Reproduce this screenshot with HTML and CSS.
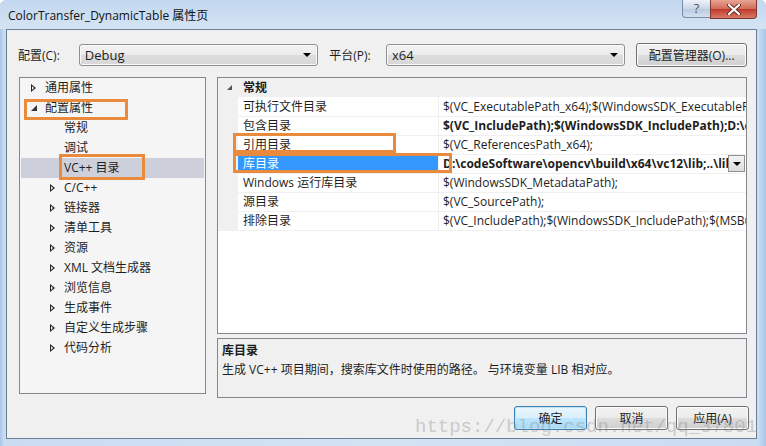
FILE: index.html
```html
<!DOCTYPE html>
<html>
<head>
    <title>ColorTransfer_DynamicTable 属性页</title>
    <link rel="stylesheet" href="styles.css">
</head>
<body>
    <div class="window">
        <div class="titlebar">
            <span class="title">ColorTransfer_DynamicTable 属性页</span>
            <div class="caption-buttons">
                <div class="cap-help">?</div>
                <div class="cap-close">
                    <svg width="14" height="11" viewBox="0 0 14 11"><path d="M2 1 L12 10 M12 1 L2 10" stroke="#6b2a22" stroke-width="4" stroke-linecap="round"/><path d="M2 1 L12 10 M12 1 L2 10" stroke="#fff" stroke-width="2.2" stroke-linecap="round"/></svg>
                </div>
            </div>
        </div>
        <div class="client">
            <div class="toolbar">
                <span class="label label-config">配置(C):</span>
                <div class="combo"><span>Debug</span><i class="arrow"></i></div>
                <span class="label label-platform">平台(P):</span>
                <div class="combo"><span>x64</span><i class="arrow"></i></div>
                <button class="btn btn-manager">配置管理器(O)...</button>
            </div>

            <div class="main">
                <div class="tree">
                    <div class="node lvl0"><i class="tri-open"></i>通用属性</div>
                    <div class="node lvl0"><i class="tri-down"></i>配置属性<span class="mark mark-config"></span></div>
                    <div class="node lvl1">常规</div>
                    <div class="node lvl1">调试</div>
                    <div class="node lvl1 selected">VC++ 目录<span class="mark mark-vc"></span></div>
                    <div class="node lvl1"><i class="tri-open"></i>C/C++</div>
                    <div class="node lvl1"><i class="tri-open"></i>链接器</div>
                    <div class="node lvl1"><i class="tri-open"></i>清单工具</div>
                    <div class="node lvl1"><i class="tri-open"></i>资源</div>
                    <div class="node lvl1"><i class="tri-open"></i>XML 文档生成器</div>
                    <div class="node lvl1"><i class="tri-open"></i>浏览信息</div>
                    <div class="node lvl1"><i class="tri-open"></i>生成事件</div>
                    <div class="node lvl1"><i class="tri-open"></i>自定义生成步骤</div>
                    <div class="node lvl1"><i class="tri-open"></i>代码分析</div>
                </div>

                <div class="right">
                    <div class="grid">
                        <div class="prow header">
                            <div class="gutter"><i class="tri-down small"></i></div>
                            <div class="name">常规</div>
                            <div class="value"></div>
                        </div>
                        <div class="prow">
                            <div class="gutter"></div>
                            <div class="name">可执行文件目录</div>
                            <div class="value">$(VC_ExecutablePath_x64);$(WindowsSDK_ExecutablePath_x64);$(VS_ExecutablePath)</div>
                        </div>
                        <div class="prow">
                            <div class="gutter"></div>
                            <div class="name">包含目录</div>
                            <div class="value bold">$(VC_IncludePath);$(WindowsSDK_IncludePath);D:\codeSoftware\opencv\build\include</div>
                        </div>
                        <div class="prow">
                            <div class="gutter"></div>
                            <div class="name">引用目录<span class="mark mark-ref"></span></div>
                            <div class="value">$(VC_ReferencesPath_x64);</div>
                        </div>
                        <div class="prow active">
                            <div class="gutter"></div>
                            <div class="name">库目录<span class="mark mark-lib"></span></div>
                            <div class="value bold editing">
                                <span class="edit-text">D:\codeSoftware\opencv\build\x64\vc12\lib;..\lib</span>
                                <span class="drop"><i class="arrow"></i></span>
                            </div>
                        </div>
                        <div class="prow">
                            <div class="gutter"></div>
                            <div class="name">Windows 运行库目录</div>
                            <div class="value">$(WindowsSDK_MetadataPath);</div>
                        </div>
                        <div class="prow">
                            <div class="gutter"></div>
                            <div class="name">源目录</div>
                            <div class="value">$(VC_SourcePath);</div>
                        </div>
                        <div class="prow">
                            <div class="gutter"></div>
                            <div class="name">排除目录</div>
                            <div class="value">$(VC_IncludePath);$(WindowsSDK_IncludePath);$(MSBuild_ExecutablePath)</div>
                        </div>
                    </div>
                    <div class="desc">
                        <div class="desc-title">库目录</div>
                        <div class="desc-text">生成 VC++ 项目期间，搜索库文件时使用的路径。 与环境变量 LIB 相对应。</div>
                    </div>
                </div>
            </div>

            <div class="footer">
                <button class="btn btn-default">确定</button>
                <button class="btn">取消</button>
                <button class="btn">应用(A)</button>
            </div>
            <div class="watermark">https://blog.csdn.net/qq_37801</div>
        </div>
    </div>
</body>
</html>
```

FILE: styles.css
```css
body {
    margin: 0;
    padding: 0;
    font-family: "Open Sans", "Noto Sans CJK SC", sans-serif;
    font-size: 12px;
    color: #1e1e1e;
}

.window {
    width: 766px;
    height: 446px;
    box-sizing: border-box;
    display: flex;
    flex-direction: column;
    background: linear-gradient(90deg, #a9c6e6 0px, #c9dcf1 4px, #d3e3f4 50%, #c9dcf1 99%, #a9c6e6 100%);
    border-radius: 6px 6px 0 0;
    overflow: hidden;
}

.titlebar {
    height: 29px;
    flex: none;
    display: flex;
    justify-content: space-between;
    align-items: flex-start;
    padding: 0 9px 0 8px;
    background: linear-gradient(#c2d7ee, #d5e4f4);
}

.title {
    margin-top: 6px;
    font-size: 12px;
    color: #111;
}

.caption-buttons {
    display: flex;
}

.cap-help {
    width: 27px;
    height: 17px;
    border: 1px solid #7a8da6;
    border-top: none;
    border-right: none;
    border-radius: 0 0 0 4px;
    background: linear-gradient(#eef3f9, #c9d7e7 50%, #b8c9de 51%, #d4e0ee);
    color: #555;
    text-align: center;
    font-size: 13px;
    line-height: 16px;
}

.cap-close {
    width: 45px;
    height: 18px;
    border: 1px solid #7a3a33;
    border-top: none;
    border-radius: 0 0 4px 0;
    background: linear-gradient(#e8a493, #d06a58 50%, #c0392b 51%, #d97a66);
    display: flex;
    align-items: center;
    justify-content: center;
}

.client {
    flex: 1;
    position: relative;
    margin: 0 9px 7px 6px;
    border: 1px solid #6d7f95;
    background-color: #f0f0f0;
    padding: 13px 9px 6px 12px;
    display: flex;
    flex-direction: column;
}

.toolbar {
    display: flex;
    align-items: center;
    height: 24px;
}

.label-config {
    width: 61px;
    margin-left: -1px;
}

.label-platform {
    width: 57px;
    margin-left: 11px;
}

.combo {
    width: 240px;
    height: 22px;
    box-sizing: border-box;
    border: 1px solid #8e8f8f;
    border-radius: 3px;
    background: linear-gradient(#f3f3f3, #ebebeb 50%, #dddddd 51%, #d8d8d8);
    box-shadow: inset 0 0 0 1px #fafafa;
    display: flex;
    align-items: center;
    justify-content: space-between;
    padding: 0 6px 0 5px;
    font-size: 13px;
}

.arrow {
    width: 0;
    height: 0;
    border-left: 4px solid transparent;
    border-right: 4px solid transparent;
    border-top: 4px solid #000;
}

.btn {
    font-family: "Open Sans", "Noto Sans CJK SC", sans-serif;
    font-size: 12px;
    color: #1e1e1e;
    height: 24px;
    box-sizing: border-box;
    border: 1px solid #707070;
    border-radius: 3px;
    background: linear-gradient(#f2f2f2, #ebebeb 50%, #dddddd 51%, #cfcfcf);
    box-shadow: inset 0 0 0 1px #fcfcfc;
    padding: 0;
}

.btn-manager {
    width: 111px;
    margin-left: 11px;
}

.main {
    display: flex;
    margin-top: 10px;
    height: 321px;
}

.tree {
    width: 187px;
    height: 317px;
    box-sizing: border-box;
    border: 1px solid #828790;
    background-color: #f5f5f5;
    padding-top: 0;
}

.node {
    position: relative;
    height: 20px;
    line-height: 20px;
    display: flex;
    align-items: center;
    white-space: nowrap;
    margin: 0 1px;
}

.node.lvl0 {
    padding-left: 24px;
}

.node.lvl1 {
    padding-left: 43px;
}

.node i {
    position: absolute;
}

.node.lvl0 i {
    left: 10px;
}

.node.lvl1 i {
    left: 29px;
}

.node.selected {
    background-color: #cdd0db;
}

.tri-open {
    width: 0;
    height: 0;
    border-top: 4px solid transparent;
    border-bottom: 4px solid transparent;
    border-left: 5px solid #222;
}

.tri-open::after {
    content: "";
    position: absolute;
    left: -4px;
    top: -2px;
    border-top: 2px solid transparent;
    border-bottom: 2px solid transparent;
    border-left: 2px solid #f5f5f5;
}

.tri-down {
    width: 0;
    height: 0;
    border-left: 6px solid transparent;
    border-bottom: 6px solid #333;
}

.tri-down.small {
    border-left-width: 5px;
    border-bottom-width: 5px;
    border-bottom-color: #555;
}

.mark {
    position: absolute;
    box-sizing: border-box;
    border: 3px solid #e98a3c;
}

.mark-config {
    left: 3px;
    top: 1px;
    width: 104px;
    height: 21px;
}

.mark-vc {
    left: 38px;
    top: -4px;
    width: 86px;
    height: 26px;
}

.right {
    flex: 1;
    margin-left: 11px;
    display: flex;
    flex-direction: column;
}

.grid {
    height: 257px;
    box-sizing: border-box;
    border: 1px solid #828790;
    background-color: #fff;
}

.prow {
    display: grid;
    grid-template-columns: 20px 200px 1fr;
    height: 19px;
    line-height: 19px;
}

.prow.header {
    background-color: #f0f0f0;
    font-weight: bold;
}

.gutter {
    background-color: #f0f0f0;
    display: flex;
    align-items: center;
    padding-left: 9px;
}

.name {
    position: relative;
    padding-left: 5px;
    white-space: nowrap;
    border-bottom: 1px solid #f0f0f0;
}

.value {
    padding-left: 4px;
    white-space: nowrap;
    overflow: hidden;
    border-left: 1px solid #f0f0f0;
    border-bottom: 1px solid #f0f0f0;
}

.header .name,
.header .value {
    border: none;
}

.bold {
    font-weight: bold;
}

.prow.active .name {
    background-color: #3399ff;
    color: #fff;
}

.value.editing {
    display: flex;
    align-items: center;
    justify-content: space-between;
    padding-right: 1px;
}

.edit-text {
    overflow: hidden;
}

.drop {
    flex: none;
    width: 15px;
    height: 15px;
    border: 1px solid #8e8f8f;
    background: linear-gradient(#f3f3f3, #dcdcdc);
    display: flex;
    align-items: center;
    justify-content: center;
}

.mark-ref {
    left: -5px;
    top: -2px;
    width: 163px;
    height: 20px;
}

.mark-lib {
    left: -5px;
    top: -1px;
    width: 219px;
    height: 20px;
    z-index: 2;
}

.desc {
    margin-top: 4px;
    height: 60px;
    box-sizing: border-box;
    border: 1px solid #828790;
    padding: 2px 4px;
    line-height: 19px;
}

.desc-title {
    font-weight: bold;
}

.footer {
    display: flex;
    justify-content: flex-end;
    gap: 8px;
    margin-top: 8px;
    margin-right: -2px;
}

.footer .btn {
    width: 73px;
}

.btn-default {
    border-color: #3c7fb1;
    background: linear-gradient(#eaf6fd, #d9f0fc 50%, #bee6fd 51%, #a7d9f5);
    box-shadow: inset 0 0 0 1px #c4e5f6;
}

.watermark {
    position: absolute;
    left: 408px;
    bottom: 0;
    font-family: "Liberation Mono", monospace;
    font-size: 19px;
    color: rgba(140, 140, 140, 0.4);
    white-space: nowrap;
    pointer-events: none;
}
```
